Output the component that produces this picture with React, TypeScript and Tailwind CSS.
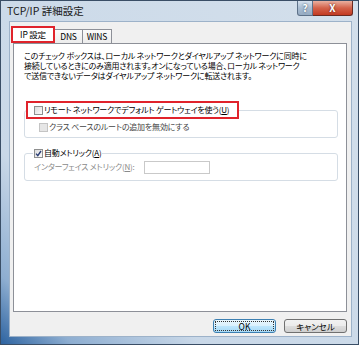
import React from "react";

const font = "font-['Noto_Sans_CJK_JP','Noto_Sans',sans-serif] [font-feature-settings:'palt']";

function Box({ checked, disabled }: { checked?: boolean; disabled?: boolean }) {
  return (
    <span
      className={`flex h-[9px] w-[9px] shrink-0 items-center justify-center border ${
        disabled
          ? "border-[#c4c4c4] bg-[#e6e6e6]"
          : "border-[#8e8f8f] bg-[linear-gradient(135deg,#dcdcdc,#fbfbfb)]"
      }`}
    >
      {checked && (
        <svg width="7" height="7" viewBox="0 0 7 7">
          <path d="M1 3.6 L2.8 5.6 L6 1" fill="none" stroke="#2a3d73" strokeWidth="1.4" />
        </svg>
      )}
    </span>
  );
}

export default function App() {
  return (
    <div
      className={`${font} flex h-[345px] w-[359px] flex-col overflow-hidden border border-[#3a4e66] bg-[linear-gradient(to_top_right,#2d63a0_0%,#8eaed1_10%,#c9d8e8_28%,#d3dfeb_100%)] text-black`}
    >
      {/* title bar */}
      <div className="flex h-[20px] items-start justify-between">
        <span className="pl-[6px] pt-[3px] text-[10.5px] leading-[14px] text-[#1a1a1a]">TCP/IP 詳細設定</span>
        <div className="mr-[5px] flex">
          <div className="flex h-[15px] w-[16px] items-center justify-center rounded-bl-[3px] border border-t-0 border-[#5d7189] bg-[linear-gradient(#d6e1ee,#a9bdd2_50%,#95abc3)] text-[10px] font-bold leading-none text-white [text-shadow:0_0_2px_#2b3b4f]">
            ?
          </div>
          <div className="flex h-[15px] w-[40px] items-center justify-center rounded-br-[3px] border border-l-0 border-t-0 border-[#6b2a20] bg-[linear-gradient(#eab0a0,#d4624a_50%,#c23a22)] text-[10px] font-bold leading-none text-white [text-shadow:0_0_2px_#4a1408]">
            X
          </div>
        </div>
      </div>

      {/* client area */}
      <div className="ml-[8px] mr-[6px] flex flex-col border border-[#9db2c9] bg-[#f0f0f0] pb-[3px] pl-[2px] pr-[4px] pt-[4px]">
        <div className="flex h-[17px] items-end text-[8.5px] leading-none tracking-[-0.2px]">
          <div className="flex h-[17px] w-[44px] -ml-[1px] items-center justify-center border-2 border-[#e0232b] bg-white">
            IP 設定
          </div>
          <div className="flex h-[14px] w-[28px] items-center justify-center border border-b-0 border-l-0 border-[#8d9098] bg-[linear-gradient(#fbfbfb,#ececec)]">
            DNS
          </div>
          <div className="flex h-[14px] w-[29px] items-center justify-center border border-b-0 border-l-0 border-[#8d9098] bg-[linear-gradient(#fbfbfb,#ececec)]">
            WINS
          </div>
        </div>

        <div className="ml-[1px] flex h-[269px] flex-col border border-[#8d9098] bg-white pl-[10px] pr-[7px] pt-[7px] text-[8px] tracking-[-0.2px]">
          <p className="whitespace-nowrap leading-[10px]">
            このチェック ボックスは、ローカル ネットワークとダイヤルアップ ネットワークに同時に
            <br />
            接続しているときにのみ適用されます。オンになっている場合、ローカル ネットワーク
            <br />
            で送信できないデータはダイヤルアップ ネットワークに転送されます。
          </p>

          <fieldset className="mt-[20px] w-[314px] rounded-[3px] border border-[#d5dde5] pb-[4px] pl-[14px]">
            <legend className="-ml-[13px]">
              <span className="flex h-[18px] items-center gap-[1px] whitespace-nowrap border-[2px] border-[#e0232b] pl-[6px] pr-[8px] leading-none">
                <Box />
                <span>リモート ネットワークでデフォルト ゲートウェイを使う(<u>U</u>)</span>
              </span>
            </legend>
            <div className="mt-[2px] flex h-[12px] items-center gap-[1px] whitespace-nowrap leading-none text-[#444]">
              <Box disabled />
              <span>クラス ベースのルートの追加を無効にする</span>
            </div>
          </fieldset>

          <fieldset className="mt-[9px] w-[314px] rounded-[3px] border border-[#d5dde5] pb-[6px] pl-[9px]">
            <legend className="-ml-[1px] px-[1px]">
              <span className="flex h-[12px] items-center gap-[1px] whitespace-nowrap leading-none">
                <Box checked />
                <span>自動メトリック(<u>A</u>)</span>
              </span>
            </legend>
            <div className="mt-[1px] flex h-[14px] items-center whitespace-nowrap leading-none">
              <span className="w-[110px] text-[#8a8a8a]">
                インターフェイス メトリック(<u>N</u>):
              </span>
              <span className="h-[13px] w-[66px] border border-[#c9c9c9] bg-white" />
            </div>
          </fieldset>
        </div>

        <div className="mt-[7px] flex justify-end gap-[8px] text-[8.5px] leading-none">
          <div className="flex h-[14px] w-[63px] items-center justify-center rounded-[3px] border border-[#3c7fb1] bg-[linear-gradient(#eaf6fd,#d9f0fc_50%,#bee6fd_51%,#a7d9f5)] p-[1px]">
            <span className="flex h-full w-full items-center justify-center border border-dotted border-[#333]">OK</span>
          </div>
          <div className="flex h-[14px] w-[63px] items-center justify-center rounded-[3px] border border-[#707070] bg-[linear-gradient(#f2f2f2,#ebebeb_50%,#dddddd_51%,#cfcfcf)]">
            キャンセル
          </div>
        </div>
      </div>
    </div>
  );
}
